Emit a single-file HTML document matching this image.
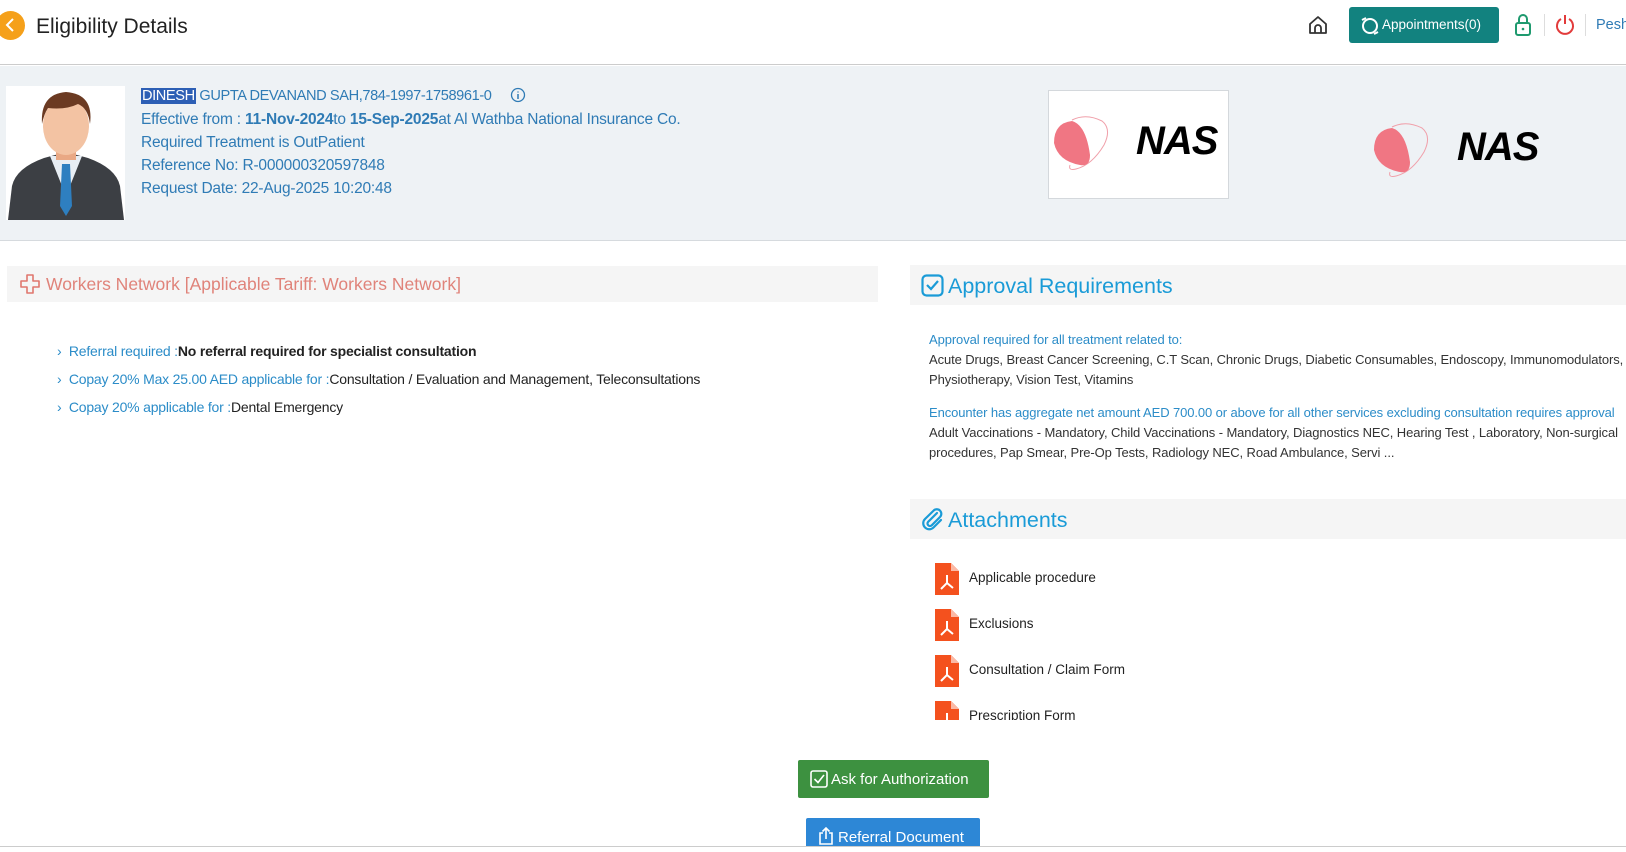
<!DOCTYPE html>
<html><head><meta charset="utf-8">
<style>
*{margin:0;padding:0;box-sizing:border-box}
body{width:1626px;height:852px;overflow:hidden;background:#fff;font-family:"Liberation Sans",sans-serif;position:relative;color:#222}
.abs{position:absolute;white-space:nowrap}
.hdr{position:absolute;left:0;top:0;width:1626px;height:65px;border-bottom:1px solid #ccc;background:#fff}
.band{position:absolute;left:0;top:66px;width:1626px;height:175px;background:#eef2f5;border-bottom:1px solid #d6dade}
.pt{color:#2f7bb5;font-size:15.5px;letter-spacing:-0.2px}
.sec{position:absolute;background:#f5f5f5}
.li{font-size:14px;letter-spacing:-0.2px}
.li .k{color:#2b8cc8}
.ap{font-size:13px;color:#333;letter-spacing:-0.1px}
.ap .b{color:#2b8cc8}
.att{font-size:13.5px;color:#222}
</style></head><body>
<div class="hdr"></div>
<div class="abs" style="left:-4px;top:11px;width:29px;height:29px;border-radius:50%;background:#f5a01a"></div>
<svg class="abs" style="left:4px;top:17px" width="12" height="16"><path d="M9 2 L3 8 L9 14" stroke="#fff" stroke-width="2" fill="none"/></svg>
<div class="abs" style="left:36px;top:15px;font-size:21px;color:#222">Eligibility Details</div>

<svg class="abs" style="left:1307px;top:14px" width="22" height="22" viewBox="0 0 22 22"><path d="M3 10 L11 3 L19 10 V19 H3 Z" stroke="#333" stroke-width="1.8" fill="none" stroke-linejoin="round"/><path d="M8 19 V14 a3 3 0 0 1 6 0 V19" stroke="#333" stroke-width="1.8" fill="none"/></svg>
<div class="abs" style="left:1349px;top:7px;width:150px;height:36px;background:#12827f;border-radius:3px"></div>
<svg class="abs" style="left:1360px;top:16px" width="20" height="20" viewBox="0 0 20 20"><circle cx="10" cy="10" r="7" stroke="#fff" stroke-width="2" fill="none"/><path d="M2 4 L6 2 M18 16 L14 18" stroke="#fff" stroke-width="2"/></svg>
<div class="abs" style="left:1382px;top:17px;font-size:13.5px;color:#fff">Appointments(0)</div>
<svg class="abs" style="left:1513px;top:13px" width="20" height="24" viewBox="0 0 20 24"><rect x="3" y="10" width="14" height="12" rx="2" stroke="#1f9a6f" stroke-width="2" fill="none"/><path d="M6 10 V6 a4 4 0 0 1 8 0 V10" stroke="#1f9a6f" stroke-width="2" fill="none"/><circle cx="10" cy="16" r="1.3" fill="#1f9a6f"/></svg>
<div class="abs" style="left:1544px;top:14px;width:1px;height:22px;background:#ddd"></div>
<svg class="abs" style="left:1554px;top:13px" width="22" height="24" viewBox="0 0 22 24"><path d="M7 6 A8 8 0 1 0 15 6" stroke="#e23b3b" stroke-width="2" fill="none"/><path d="M11 2 V11" stroke="#e23b3b" stroke-width="2"/></svg>
<div class="abs" style="left:1585px;top:14px;width:1px;height:22px;background:#ddd"></div>
<div class="abs" style="left:1596px;top:17px;font-size:14.5px;color:#2f7bb5">Pesh</div>

<div class="band"></div>
<div class="abs" style="left:6px;top:86px;width:119px;height:134px;background:#fff;overflow:hidden">
<svg width="119" height="134" viewBox="0 0 119 134"><path d="M2 134 L6 100 Q10 82 38 72 L60 66 L82 72 Q110 82 114 100 L118 134 Z" fill="#3c3f44"/><path d="M44 70 L60 110 L76 70 Z" fill="#e8eef4"/><path d="M56 78 L64 78 L66 120 L60 130 L54 120 Z" fill="#2e7fc0"/><rect x="50" y="50" width="20" height="24" fill="#e9a884"/><ellipse cx="60" cy="40" rx="23" ry="29" fill="#f3c3a3"/><path d="M36 38 Q34 8 60 6 Q88 8 84 38 Q82 22 72 18 Q60 24 42 22 Q38 28 36 38 Z" fill="#6b3a22"/></svg></div>
<div class="abs pt" style="left:141px;top:88px;font-size:14.6px;letter-spacing:-0.4px"><span style="background:#2d5fb5;color:#fff;padding:0 1px">DINESH</span> GUPTA DEVANAND SAH,784-1997-1758961-0</div>
<svg class="abs" style="left:510px;top:87px" width="16" height="16"><circle cx="8" cy="8" r="6.5" stroke="#2f7bb5" stroke-width="1.3" fill="none"/><path d="M8 7 V12 M8 4.5 V5.5" stroke="#2f7bb5" stroke-width="1.5"/></svg>
<div class="abs pt" style="left:141px;top:111px">Effective from : <b style="font-weight:600">11-Nov-2024</b>to <b style="font-weight:600">15-Sep-2025</b>at Al Wathba National Insurance Co.</div>
<div class="abs pt" style="left:141px;top:134px">Required Treatment is OutPatient</div>
<div class="abs pt" style="left:141px;top:157px">Reference No: R-000000320597848</div>
<div class="abs pt" style="left:141px;top:180px">Request Date: 22-Aug-2025 10:20:48</div>

<div class="abs" style="left:1048px;top:90px;width:181px;height:109px;background:#fff;border:1px solid #d4d8dc"></div>
<svg class="abs" style="left:1050px;top:115px" width="70" height="60" viewBox="0 0 70 60"><path d="M22 5 Q36 -2 52 6 Q62 14 54 30 Q42 50 26 54 Q18 56 20 50" stroke="#f0a0aa" stroke-width="1" fill="none"/><path d="M22 6 Q36 10 40 40 Q40 52 30 50 Q8 46 4 28 Q4 8 22 6 Z" fill="#f07683"/></svg>
<div class="abs" style="left:1136px;top:119px;font-size:40px;font-weight:bold;font-style:italic;color:#000;letter-spacing:-1px">NAS</div>
<svg class="abs" style="left:1370px;top:122px" width="70" height="60" viewBox="0 0 70 60"><path d="M22 5 Q36 -2 52 6 Q62 14 54 30 Q42 50 26 54 Q18 56 20 50" stroke="#f0a0aa" stroke-width="1" fill="none"/><path d="M22 6 Q36 10 40 40 Q40 52 30 50 Q8 46 4 28 Q4 8 22 6 Z" fill="#f07683"/></svg>
<div class="abs" style="left:1457px;top:125px;font-size:40px;font-weight:bold;font-style:italic;color:#000;letter-spacing:-1px">NAS</div>

<div class="sec" style="left:7px;top:266px;width:871px;height:36px"></div>
<svg class="abs" style="left:19px;top:273px" width="22" height="22" viewBox="0 0 22 22"><path d="M8 2 H14 V8 H20 V14 H14 V20 H8 V14 H2 V8 H8 Z" stroke="#e0776e" stroke-width="1.6" fill="none" stroke-linejoin="round"/></svg>
<div class="abs" style="left:46px;top:274px;font-size:17.5px;color:#e0837a">Workers Network [Applicable Tariff: Workers Network]</div>
<div class="abs li" style="left:57px;top:343px"><span class="k">›&nbsp; Referral required :</span><b>No referral required for specialist consultation</b></div>
<div class="abs li" style="left:57px;top:371px"><span class="k">›&nbsp; Copay 20% Max 25.00 AED applicable for :</span>Consultation / Evaluation and Management, Teleconsultations</div>
<div class="abs li" style="left:57px;top:399px"><span class="k">›&nbsp; Copay 20% applicable for :</span>Dental Emergency</div>

<div class="sec" style="left:910px;top:265px;width:716px;height:40px"></div>
<svg class="abs" style="left:921px;top:274px" width="23" height="23" viewBox="0 0 23 23"><rect x="1.5" y="1.5" width="20" height="20" rx="4" stroke="#1a9bd7" stroke-width="2.2" fill="none"/><path d="M6 11 L10 15 L17 7" stroke="#1a9bd7" stroke-width="2.2" fill="none"/></svg>
<div class="abs" style="left:948px;top:274px;font-size:21.5px;color:#1a9bd7">Approval Requirements</div>
<div class="abs ap" style="left:929px;top:332px"><span class="b">Approval required for all treatment related to:</span></div>
<div class="abs ap" style="left:929px;top:352px">Acute Drugs, Breast Cancer Screening, C.T Scan, Chronic Drugs, Diabetic Consumables, Endoscopy, Immunomodulators,</div>
<div class="abs ap" style="left:929px;top:372px">Physiotherapy, Vision Test, Vitamins</div>
<div class="abs ap" style="left:929px;top:405px"><span class="b">Encounter has aggregate net amount AED 700.00 or above for all other services excluding consultation requires approval</span></div>
<div class="abs ap" style="left:929px;top:425px">Adult Vaccinations - Mandatory, Child Vaccinations - Mandatory, Diagnostics NEC, Hearing Test , Laboratory, Non-surgical</div>
<div class="abs ap" style="left:929px;top:445px">procedures, Pap Smear, Pre-Op Tests, Radiology NEC, Road Ambulance, Servi ...</div>

<div class="sec" style="left:910px;top:499px;width:716px;height:40px"></div>
<svg class="abs" style="left:921px;top:507px" width="24" height="24" viewBox="0 0 24 24"><path d="M16 6 L7 15 a2.5 2.5 0 0 0 3.5 3.5 L19 10 a4.5 4.5 0 0 0 -6.4 -6.4 L4 12 a6 6 0 0 0 8.5 8.5 L20 13" stroke="#1a9bd7" stroke-width="2.2" fill="none" stroke-linecap="round"/></svg>
<div class="abs" style="left:948px;top:508px;font-size:21.5px;color:#1a9bd7">Attachments</div>
<div class="abs" style="left:930px;top:555px;width:300px;height:165px;overflow:hidden">
 <div style="position:relative;height:165px">
  <svg style="position:absolute;left:5px;top:8px" width="24" height="32" viewBox="0 0 24 32"><path d="M0 0 H16 L24 8 V32 H0 Z" fill="#f4511e"/><path d="M16 0 V8 H24" fill="#fbb9a5"/><path d="M12 12 V20 L6 26 M12 20 L18 25" stroke="#fff" stroke-width="2" fill="none"/></svg>
  <div class="att" style="position:absolute;left:39px;top:15px">Applicable procedure</div>
  <svg style="position:absolute;left:5px;top:54px" width="24" height="32" viewBox="0 0 24 32"><path d="M0 0 H16 L24 8 V32 H0 Z" fill="#f4511e"/><path d="M16 0 V8 H24" fill="#fbb9a5"/><path d="M12 12 V20 L6 26 M12 20 L18 25" stroke="#fff" stroke-width="2" fill="none"/></svg>
  <div class="att" style="position:absolute;left:39px;top:61px">Exclusions</div>
  <svg style="position:absolute;left:5px;top:100px" width="24" height="32" viewBox="0 0 24 32"><path d="M0 0 H16 L24 8 V32 H0 Z" fill="#f4511e"/><path d="M16 0 V8 H24" fill="#fbb9a5"/><path d="M12 12 V20 L6 26 M12 20 L18 25" stroke="#fff" stroke-width="2" fill="none"/></svg>
  <div class="att" style="position:absolute;left:39px;top:107px">Consultation / Claim Form</div>
  <svg style="position:absolute;left:5px;top:146px" width="24" height="32" viewBox="0 0 24 32"><path d="M0 0 H16 L24 8 V32 H0 Z" fill="#f4511e"/><path d="M16 0 V8 H24" fill="#fbb9a5"/><path d="M12 12 V20 L6 26 M12 20 L18 25" stroke="#fff" stroke-width="2" fill="none"/></svg>
  <div class="att" style="position:absolute;left:39px;top:153px">Prescription Form</div>
 </div>
</div>

<div class="abs" style="left:798px;top:760px;width:191px;height:38px;background:#3d9140;border-radius:2px"></div>
<svg class="abs" style="left:810px;top:770px" width="18" height="18" viewBox="0 0 18 18"><rect x="1" y="1" width="16" height="16" rx="2" stroke="#fff" stroke-width="1.6" fill="none"/><path d="M4.5 9 L8 12.5 L14 5" stroke="#fff" stroke-width="1.6" fill="none"/></svg>
<div class="abs" style="left:831px;top:771px;font-size:15px;color:#fff">Ask for Authorization</div>
<div class="abs" style="left:806px;top:818px;width:174px;height:30px;background:#2d87d6;border-radius:2px"></div>
<svg class="abs" style="left:818px;top:827px" width="16" height="18" viewBox="0 0 16 18"><path d="M5 6 H2 V17 H14 V6 H11 M8 12 V1 M4.5 4.5 L8 1 L11.5 4.5" stroke="#fff" stroke-width="1.6" fill="none"/></svg>
<div class="abs" style="left:838px;top:829px;font-size:15px;color:#fff">Referral Document</div>
<div class="abs" style="left:0;top:846px;width:1626px;height:1px;background:#ccc"></div>
<div class="abs" style="left:0;top:847px;width:1626px;height:5px;background:#fff"></div>
</body></html>
